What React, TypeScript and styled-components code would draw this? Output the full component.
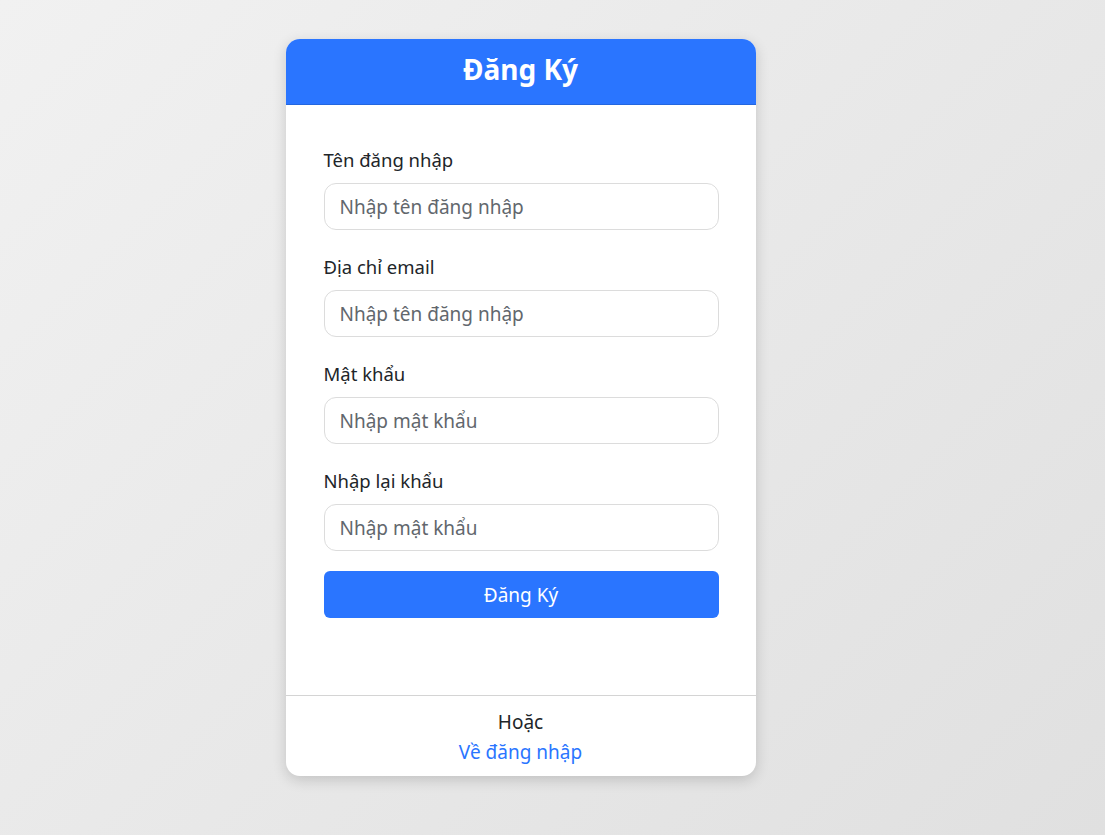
import React from 'react'
import styled, { createGlobalStyle } from 'styled-components'

const BLUE = '#2a75ff'

const fields = [
  { label: 'Tên đăng nhập', placeholder: 'Nhập tên đăng nhập', type: 'text' },
  { label: 'Địa chỉ email', placeholder: 'Nhập tên đăng nhập', type: 'email' },
  { label: 'Mật khẩu', placeholder: 'Nhập mật khẩu', type: 'password' },
  { label: 'Nhập lại khẩu', placeholder: 'Nhập mật khẩu', type: 'password' },
]

export default function App() {
  return (
    <>
      <GlobalStyle />
      <Page>
        <Card>
          <Header>Đăng Ký</Header>
          <Body>
            {fields.map((f, i) => (
              <Group key={i}>
                <Label>{f.label}</Label>
                <Input type={f.type} placeholder={f.placeholder} />
              </Group>
            ))}
            <Submit>Đăng Ký</Submit>
          </Body>
          <Footer>
            <Or>Hoặc</Or>
            <BackLink href="#">Về đăng nhập</BackLink>
          </Footer>
        </Card>
      </Page>
    </>
  )
}

const GlobalStyle = createGlobalStyle`
  html, body {
    margin: 0;
    padding: 0;
  }
  body {
    font-family: 'Noto Sans', 'Open Sans', sans-serif;
    color: #212529;
  }
`

const Page = styled.div`
  min-height: 835px;
  background: linear-gradient(135deg, #f1f1f1 0%, #e0e0e0 100%);
  display: flex;
  justify-content: center;
  align-items: flex-start;
  padding-top: 39px;
  padding-right: 64px;
  box-sizing: border-box;
`

const Card = styled.div`
  width: 470px;
  background: #fff;
  border-radius: 14px;
  overflow: hidden;
  box-shadow: 0 4px 14px rgba(0, 0, 0, 0.16);
`

const Header = styled.h1`
  margin: 0;
  height: 66px;
  padding-bottom: 5px;
  box-sizing: border-box;
  background: ${BLUE};
  border-bottom: 1px solid #2466de;
  color: #fff;
  font-size: 28px;
  font-weight: 700;
  display: flex;
  align-items: center;
  justify-content: center;
`

const Body = styled.div`
  padding: 41px 37px 77px 38px;
`

const Group = styled.div`
  display: flex;
  flex-direction: column;
  margin-bottom: 23px;

  &:last-of-type {
    margin-bottom: 20px;
  }
`

const Label = styled.label`
  font-size: 18.5px;
  line-height: 27px;
  margin-bottom: 10px;
  color: #212529;
`

const Input = styled.input`
  height: 47px;
  box-sizing: border-box;
  border: 1px solid #dcdcdc;
  border-radius: 12px;
  padding: 0 15px;
  font-family: inherit;
  font-size: 19px;
  color: #212529;
  outline: none;

  &::placeholder {
    color: #62676d;
  }
`

const Submit = styled.button`
  width: 100%;
  height: 47px;
  border: none;
  border-radius: 6px;
  background: ${BLUE};
  color: #fff;
  font-family: inherit;
  font-size: 19px;
  cursor: pointer;
`

const Footer = styled.div`
  border-top: 1px solid #d4d4d4;
  padding: 11px 0 9px;
  display: flex;
  flex-direction: column;
  align-items: center;
  font-size: 19px;
  line-height: 30px;
`

const Or = styled.span`
  color: #212529;
`

const BackLink = styled.a`
  color: ${BLUE};
  text-decoration: none;
`
